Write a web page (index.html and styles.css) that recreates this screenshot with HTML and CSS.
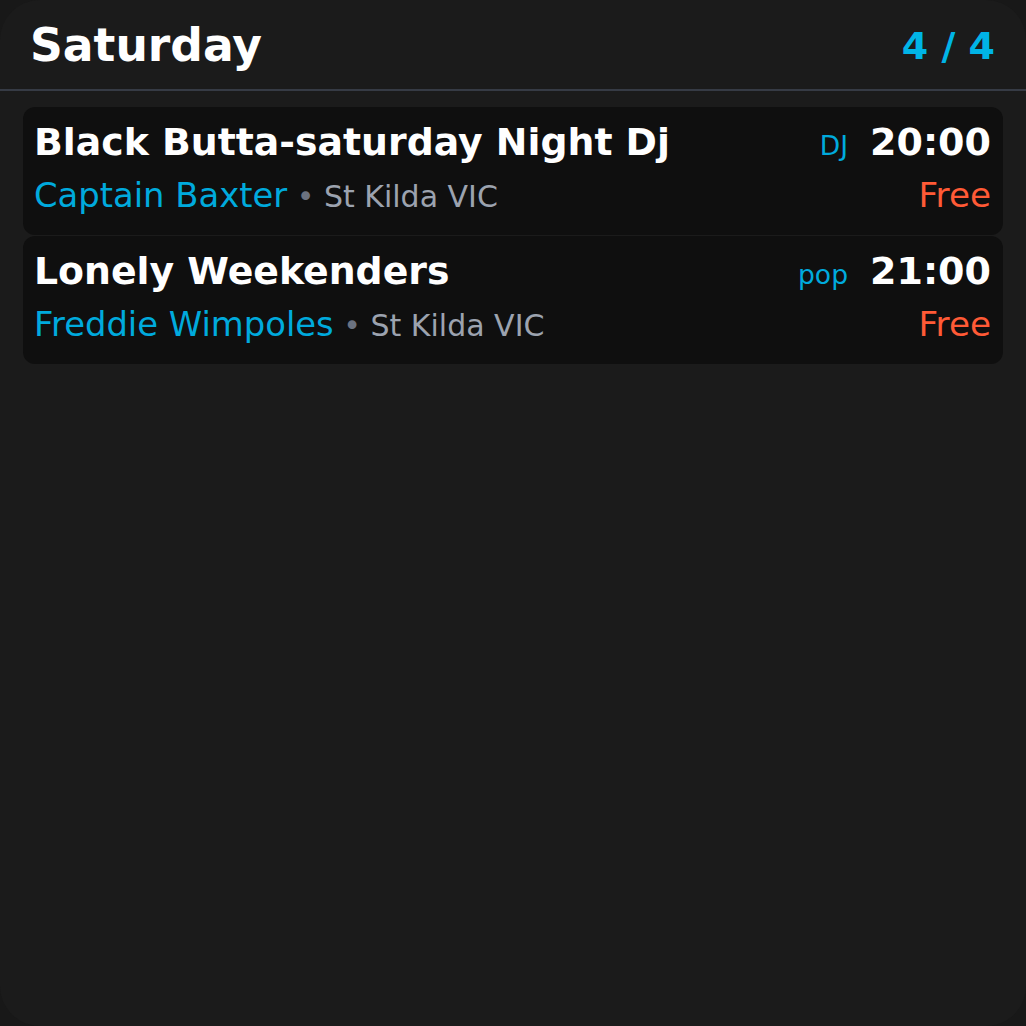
FILE: index.html
```html
<!DOCTYPE html>
<html>
<head>
<meta charset="utf-8">
<link rel="stylesheet" href="styles.css">
</head>
<body>
<div class="screen">
  <header class="header">
    <h1 class="day">Saturday</h1>
    <div class="count">4 / 4</div>
  </header>
  <div class="list">
    <div class="card">
      <div class="row">
        <div class="title">Black Butta-saturday Night Dj</div>
        <div class="right">
          <span class="tag">DJ</span>
          <span class="time">20:00</span>
        </div>
      </div>
      <div class="row">
        <div class="sub"><span class="artist">Captain Baxter</span> <span class="dot">•</span> <span class="loc">St Kilda VIC</span></div>
        <div class="price">Free</div>
      </div>
    </div>
    <div class="card">
      <div class="row">
        <div class="title">Lonely Weekenders</div>
        <div class="right">
          <span class="tag">pop</span>
          <span class="time">21:00</span>
        </div>
      </div>
      <div class="row">
        <div class="sub"><span class="artist">Freddie Wimpoles</span> <span class="dot">•</span> <span class="loc">St Kilda VIC</span></div>
        <div class="price">Free</div>
      </div>
    </div>
  </div>
</div>
</body>
</html>
```
FILE: styles.css
```css
html, body {
  margin: 0;
  padding: 0;
  background: #181818;
}
body {
  font-family: "DejaVu Sans", sans-serif;
  font-size: 38px;
  color: #ffffff;
}
.screen {
  width: 1026px;
  height: 1026px;
  background: #1b1b1b;
  border-radius: 40px;
  overflow: hidden;
  box-sizing: border-box;
}
.header {
  display: flex;
  justify-content: space-between;
  align-items: center;
  padding: 19px 31px 17px 30px;
  border-bottom: 2px solid #363b45;
}
.day {
  margin: 0;
  font-size: 45.6px;
  font-weight: bold;
  color: #ffffff;
}
.count {
  font-size: 38px;
  font-weight: bold;
  color: #00b4e6;
}
.list {
  padding: 16px 23px;
  display: flex;
  flex-direction: column;
  gap: 1px;
}
.card {
  background: #0f0f0f;
  border-radius: 12px;
  padding: 13px 12px 20px 11px;
  display: flex;
  flex-direction: column;
  gap: 11px;
}
.row {
  display: flex;
  justify-content: space-between;
  align-items: baseline;
}
.title {
  font-weight: bold;
  font-size: 37.8px;
}
.right {
  display: flex;
  align-items: baseline;
  gap: 22px;
}
.tag {
  font-size: 26.6px;
  color: #00aadd;
}
.time {
  font-weight: bold;
  font-size: 38px;
}
.sub {
  font-size: 30px;
}
.artist {
  font-size: 33.8px;
  color: #00aadd;
}
.dot {
  color: #6b7280;
}
.loc {
  color: #9ca3af;
}
.price {
  font-size: 34.2px;
  color: #ff5a36;
}
```
